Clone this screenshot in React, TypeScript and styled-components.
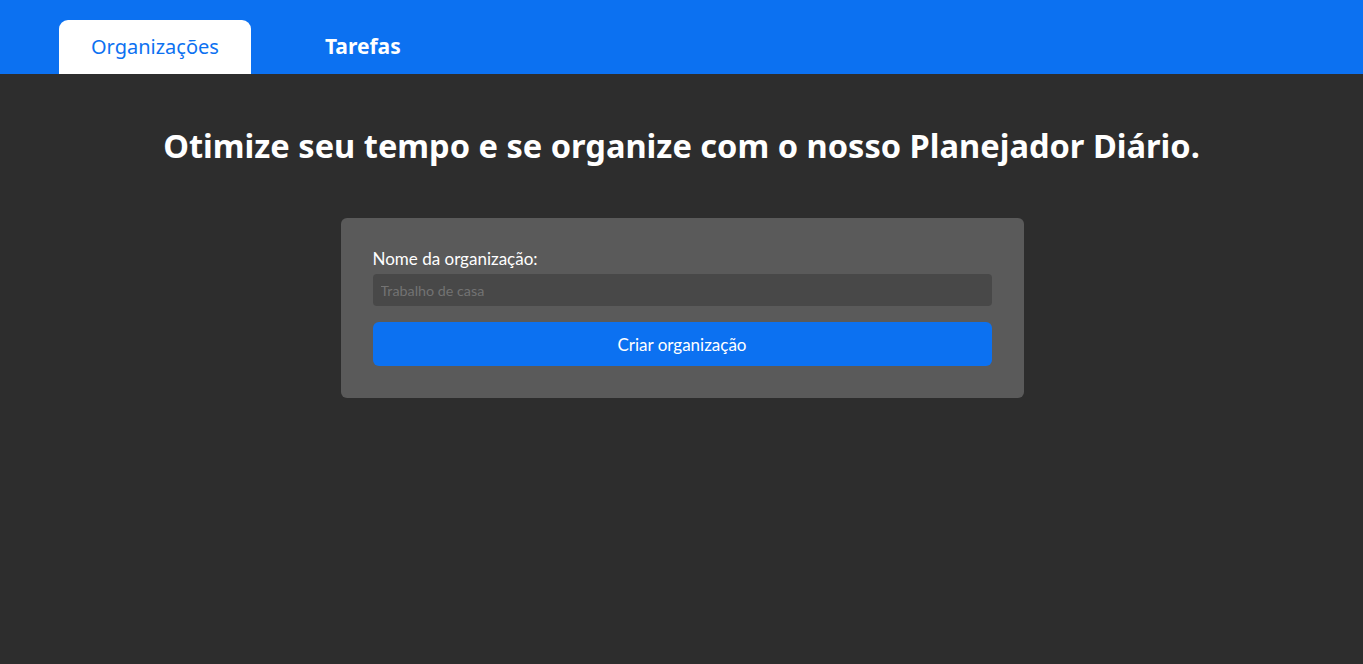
import React from "react";
import styled, { createGlobalStyle } from "styled-components";

const Global = createGlobalStyle`
  html, body { margin: 0; padding: 0; background: #2d2d2d; }
  * { box-sizing: border-box; }
`;

const Page = styled.div`
  min-height: 664px;
  background: #2d2d2d;
  font-family: "Noto Sans", sans-serif;
`;

const Header = styled.header`
  height: 74px;
  background: #0c71f1;
  display: flex;
  align-items: flex-end;
  padding-left: 59px;
  gap: 42px;
`;

const Tab = styled.div<{ $active?: boolean }>`
  height: 54px;
  padding: 0 32px 2px;
  display: flex;
  align-items: center;
  border-radius: 9px 9px 0 0;
  font-family: "Noto Sans", sans-serif;
  font-size: ${(p) => (p.$active ? "20px" : "21px")};
  font-weight: ${(p) => (p.$active ? 400 : 700)};
  background: ${(p) => (p.$active ? "#ffffff" : "transparent")};
  color: ${(p) => (p.$active ? "#0c71f1" : "#ffffff")};
`;

const Main = styled.main`
  display: flex;
  flex-direction: column;
  align-items: center;
  padding-top: 51px;
`;

const Title = styled.h1`
  margin: 0;
  font-family: "Noto Sans", sans-serif;
  font-weight: 700;
  font-size: 32.6px;
  line-height: 42px;
  color: #ffffff;
`;

const Card = styled.form`
  margin: 51px 0 0 1px;
  width: 683px;
  background: #5a5a5a;
  border-radius: 6px;
  padding: 30px 32px 32px;
  display: flex;
  flex-direction: column;
`;

const Label = styled.label`
  font-family: "Lato", sans-serif;
  font-size: 17px;
  line-height: 22px;
  color: #ffffff;
  margin-bottom: 4px;
`;

const Input = styled.input`
  height: 32px;
  width: 100%;
  border: none;
  outline: none;
  border-radius: 4px;
  background: #484848;
  padding: 0 8px;
  font-family: "Lato", sans-serif;
  font-size: 14.3px;
  color: #ffffff;
  &::placeholder { color: #737373; }
`;

const Button = styled.button`
  margin-top: 16px;
  height: 44px;
  width: 100%;
  border: none;
  border-radius: 6px;
  background: #0c71f1;
  color: #ffffff;
  font-family: "Lato", sans-serif;
  font-size: 17px;
  cursor: pointer;
`;

export default function App() {
  return (
    <Page>
      <Global />
      <Header>
        <Tab $active>Organizações</Tab>
        <Tab>Tarefas</Tab>
      </Header>
      <Main>
        <Title>Otimize seu tempo e se organize com o nosso Planejador Diário.</Title>
        <Card onSubmit={(e) => e.preventDefault()}>
          <Label htmlFor="org">Nome da organização:</Label>
          <Input id="org" placeholder="Trabalho de casa" />
          <Button type="submit">Criar organização</Button>
        </Card>
      </Main>
    </Page>
  );
}
